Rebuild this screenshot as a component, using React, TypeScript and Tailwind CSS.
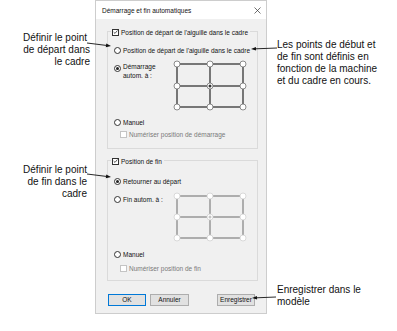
import React from "react";

const F = { fontFamily: '"Liberation Sans", Arial, sans-serif' };

function Radio({ checked = false }: { checked?: boolean }) {
  return (
    <span className="w-[7px] h-[7px] shrink-0 rounded-full border border-[#333] bg-white flex items-center justify-center">
      {checked && <span className="w-[3px] h-[3px] rounded-full bg-[#222]" />}
    </span>
  );
}

function Check({ checked = false, disabled = false }: { checked?: boolean; disabled?: boolean }) {
  return (
    <span
      className={
        "w-[7px] h-[7px] shrink-0 border bg-white flex items-center justify-center " +
        (disabled ? "border-[#c4c4c4]" : "border-[#333]")
      }
    >
      {checked && (
        <svg width="6" height="6" viewBox="0 0 6 6">
          <path d="M0.8 3.1 L2.4 4.7 L5.3 1.2" fill="none" stroke="#222" strokeWidth="0.9" />
        </svg>
      )}
    </span>
  );
}

function Grid({ ys, dim }: { ys: number[]; dim?: boolean }) {
  const xs = [5, 38, 71];
  const lineC = dim ? "#6a6a6a" : "#1c1c1c";
  const circC = dim ? "#d0d0d0" : "#707070";
  const lw = dim ? 1.0 : 1.15;
  const lines: React.ReactNode[] = [];
  ys.forEach((y, r) => {
    for (let c = 0; c < 2; c++) {
      lines.push(<line key={`h${r}${c}`} x1={xs[c] + 3} y1={y} x2={xs[c + 1] - 3} y2={y} stroke={lineC} strokeWidth={lw} />);
    }
  });
  xs.forEach((x, c) => {
    for (let r = 0; r < 2; r++) {
      lines.push(<line key={`v${r}${c}`} x1={x} y1={ys[r] + 3} x2={x} y2={ys[r + 1] - 3} stroke={lineC} strokeWidth={lw} />);
    }
  });
  return (
    <svg width="76" height="52" viewBox="0 0 76 52" className="shrink-0">
      {lines}
      {ys.map((y, r) =>
        xs.map((x, c) => (
          <g key={`c${r}${c}`}>
            <circle cx={x} cy={y} r={3} fill="#fff" stroke={circC} strokeWidth={0.8} />
            {r === 1 && c === 1 && <circle cx={x} cy={y} r={1.5} fill={dim ? "#c4c4c4" : "#333"} />}
          </g>
        ))
      )}
    </svg>
  );
}

function Arrow({ x1, y1, x2, y2 }: { x1: number; y1: number; x2: number; y2: number }) {
  const dx = x2 - x1;
  const dy = y2 - y1;
  const len = Math.sqrt(dx * dx + dy * dy);
  const ux = dx / len;
  const uy = dy / len;
  const L = 5;
  const W = 1.8;
  const bx = x2 - ux * L;
  const by = y2 - uy * L;
  const p1 = `${x2},${y2}`;
  const p2 = `${bx - uy * W},${by + ux * W}`;
  const p3 = `${bx + uy * W},${by - ux * W}`;
  return (
    <g>
      <line x1={x1} y1={y1} x2={bx} y2={by} stroke="#111" strokeWidth={0.9} />
      <polygon points={`${p1} ${p2} ${p3}`} fill="#111" />
    </g>
  );
}

function Btn({ label, w, primary = false, className = "" }: { label: string; w: string; primary?: boolean; className?: string }) {
  return (
    <div
      className={
        `${w} h-[12px] flex items-center justify-center bg-[#e1e1e1] border text-[6.5px] leading-none text-[#111] ` +
        (primary ? "border-[#0078d7]" : "border-[#adadad]") +
        " " +
        className
      }
    >
      {label}
    </div>
  );
}

export default function App() {
  return (
    <div className="relative w-[397px] h-[331px] bg-white overflow-hidden text-[#111]" style={F}>
      <div className="flex">
        {/* Left annotations */}
        <div className="w-[95px] shrink-0 flex flex-col text-[10px] leading-[12px] text-right">
          <div className="mt-[32px] flex flex-col items-end">
            <span className="pr-[8px] whitespace-nowrap">Définir le point</span>
            <span className="pr-[5px] whitespace-nowrap">de départ dans</span>
            <span className="pr-[5px] whitespace-nowrap">le cadre</span>
          </div>
          <div className="mt-[96px] flex flex-col items-end">
            <span className="pr-[8px] whitespace-nowrap">Définir le point</span>
            <span className="pr-[8px] whitespace-nowrap">de fin dans le</span>
            <span className="pr-[8px] whitespace-nowrap">cadre</span>
          </div>
        </div>

        {/* Dialog */}
        <div className="w-[172px] h-[314px] shrink-0 flex flex-col border border-[#cdcdcd] bg-[#f0f0f0] text-[6.5px] leading-[9px]">
          <div className="h-[18px] bg-white flex items-center justify-between pl-[6px] pr-[5px]">
            <span className="whitespace-nowrap">Démarrage et fin automatiques</span>
            <svg width="7" height="7" viewBox="0 0 7 7">
              <path d="M0.5 0.5 L6.5 6.5 M6.5 0.5 L0.5 6.5" stroke="#333" strokeWidth="0.7" />
            </svg>
          </div>
          <div className="flex-1 flex flex-col pl-[11px]">
            {/* Group 1 */}
            <div className="relative mt-[12px] w-[151px] h-[118px] border border-[#dadada] flex flex-col">
              <div className="absolute top-[-5px] left-[3px] h-[10px] flex items-center gap-[2px] bg-[#f0f0f0] pl-[1px] pr-[2px]">
                <Check checked />
                <span className="whitespace-nowrap">Position de départ de l'aiguille dans le cadre</span>
              </div>
              <div className="mt-[13px] h-[10px] flex items-center gap-[2px] pl-[6px]">
                <Radio />
                <span className="whitespace-nowrap">Position de départ de l'aiguille dans le cadre</span>
              </div>
              <div className="mt-[4px] h-[52px] flex pl-[6px]">
                <div className="w-[58px] flex items-start gap-[2px]">
                  <span className="mt-[6px]">
                    <Radio checked />
                  </span>
                  <span className="mt-[2.5px] whitespace-nowrap">
                    Démarrage
                    <br />
                    autom. à :
                  </span>
                </div>
                <Grid ys={[5, 27, 48]} />
              </div>
              <div className="mt-[6px] h-[10px] flex items-center gap-[2px] pl-[6px]">
                <Radio />
                <span>Manuel</span>
              </div>
              <div className="mt-[2px] h-[10px] flex items-center gap-[2px] pl-[12px] text-[#7a7a7a]">
                <Check disabled />
                <span className="whitespace-nowrap">Numériser position de démarrage</span>
              </div>
            </div>

            {/* Group 2 */}
            <div className="relative mt-[11px] w-[151px] h-[121px] border border-[#dadada] flex flex-col">
              <div className="absolute top-[-5px] left-[3px] h-[10px] flex items-center gap-[2px] bg-[#f0f0f0] pl-[1px] pr-[2px]">
                <Check checked />
                <span className="whitespace-nowrap">Position de fin</span>
              </div>
              <div className="mt-[15px] h-[10px] flex items-center gap-[2px] pl-[6px]">
                <Radio checked />
                <span className="whitespace-nowrap">Retourner au départ</span>
              </div>
              <div className="mt-[5px] h-[52px] flex pl-[6px]">
                <div className="w-[58px] flex items-start gap-[2px]">
                  <span className="mt-[4.5px]">
                    <Radio />
                  </span>
                  <span className="mt-[3.5px] whitespace-nowrap">Fin autom. à :</span>
                </div>
                <Grid ys={[5, 26, 47]} dim />
              </div>
              <div className="mt-[6px] h-[10px] flex items-center gap-[2px] pl-[6px]">
                <Radio />
                <span>Manuel</span>
              </div>
              <div className="mt-[4px] h-[10px] flex items-center gap-[2px] pl-[12px] text-[#7a7a7a]">
                <Check disabled />
                <span className="whitespace-nowrap">Numériser position de fin</span>
              </div>
            </div>

            {/* Buttons */}
            <div className="mt-[13px] flex">
              <Btn label="OK" w="w-[38px]" primary className="ml-[1px]" />
              <Btn label="Annuler" w="w-[39px]" className="ml-[4px]" />
              <Btn label="Enregistrer" w="w-[38px]" className="ml-[28px]" />
            </div>
          </div>
        </div>

        {/* Right annotations */}
        <div className="flex-1 flex flex-col pl-[10px] text-[10px] leading-[12px]">
          <div className="mt-[39px] flex flex-col">
            <span className="whitespace-nowrap">Les points de début et</span>
            <span className="whitespace-nowrap">de fin sont définis en</span>
            <span className="whitespace-nowrap">fonction de la machine</span>
            <span className="whitespace-nowrap">et du cadre en cours.</span>
          </div>
          <div className="mt-[197px] flex flex-col">
            <span className="whitespace-nowrap">Enregistrer dans le</span>
            <span className="whitespace-nowrap">modèle</span>
          </div>
        </div>
      </div>

      <svg className="absolute inset-0 pointer-events-none" width="397" height="331" viewBox="0 0 397 331">
        <Arrow x1={87} y1={43} x2={111} y2={46} />
        <Arrow x1={87} y1={174} x2={111} y2={177} />
        <Arrow x1={277} y1={48} x2={251} y2={49} />
        <Arrow x1={276} y1={297} x2={252} y2={298} />
      </svg>
    </div>
  );
}
